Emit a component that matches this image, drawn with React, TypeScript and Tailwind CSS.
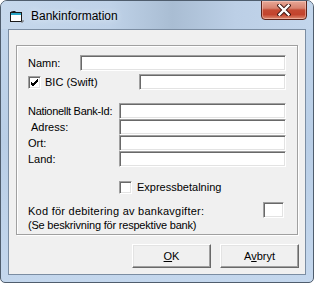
import React from 'react'

const sunken =
  'bg-white border border-t-[#a0a0a0] border-l-[#a0a0a0] border-b-white border-r-white shadow-[inset_1px_1px_0_#696969,inset_-1px_-1px_0_#e3e3e3]'

const raised =
  'bg-[#f0f0f0] border border-t-white border-l-white border-b-[#696969] border-r-[#696969] shadow-[inset_-1px_-1px_0_#a0a0a0,inset_1px_1px_0_#e3e3e3]'

function Field({ className = '' }: { className?: string }) {
  return <div className={`h-[16px] ${sunken} ${className}`} />
}

function Check({ checked }: { checked?: boolean }) {
  return (
    <div className={`w-[13px] h-[13px] shrink-0 flex items-center justify-center ${sunken}`}>
      {checked && (
        <svg width="9" height="9" viewBox="0 0 9 9">
          <path d="M1 4 L3 6 L8 1 M1 5 L3 7 L8 2 M1 6 L3 8 L8 3" stroke="#000" strokeWidth="1" fill="none" />
        </svg>
      )}
    </div>
  )
}

function Button({ children }: { children: React.ReactNode }) {
  return (
    <div className={`w-[79px] h-[24px] flex items-center justify-center text-[11px] text-black ${raised}`}>
      {children}
    </div>
  )
}

export default function App() {
  return (
    <div className="w-[314px] h-[283px] bg-white" style={{ fontFamily: '"Liberation Sans", Arial, sans-serif' }}>
      <div className="w-[314px] h-[283px] flex flex-col rounded-t-[7px] rounded-b-[5px] border border-[#4f5d6d] bg-gradient-to-b from-[#c2d6ec] via-[#b9cee6] to-[#c4d7ed] overflow-hidden">
        {/* title bar */}
        <div className="h-[28px] flex items-start shrink-0 bg-[linear-gradient(90deg,#c6d8ec_0%,#bfd2e8_35%,#a9bdd3_55%,#bccfe6_75%,#c3d6ec_100%)]">
          <svg className="mt-[10px] ml-[9px]" width="14" height="12" viewBox="0 0 14 12">
            <rect x="0.5" y="1.5" width="11" height="9" fill="#fff" stroke="#1a1a1a" />
            <rect x="1" y="2" width="10" height="2" fill="#2aa6c8" />
            <path d="M0.5 1.5 L2.5 0.5 L5.5 0.5" stroke="#1a1a1a" fill="none" />
            <path d="M11 11 L13 11 L13 9" stroke="#6a6a6a" fill="none" />
          </svg>
          <span className="ml-[7px] mt-[8px] text-[12px] leading-[14px] text-black [text-shadow:0_0_6px_#eaf2fb]">
            Bankinformation
          </span>
          <div className="ml-auto mr-[6px] -mt-[1px] w-[46px] h-[20px] rounded-b-[4px] border border-[#5b2219] bg-[linear-gradient(180deg,#e8a897_0%,#d7826f_40%,#c44a33_50%,#c3432d_75%,#dd8b72_100%)] shadow-[inset_0_0_0_1px_rgba(255,220,210,0.45)] flex items-center justify-center">
            <svg width="14" height="12" viewBox="0 0 14 12">
              <path d="M2.5 1.5 L11.5 10.5 M11.5 1.5 L2.5 10.5" stroke="#3a1410" strokeWidth="4.2" strokeLinecap="square" />
              <path d="M2.5 1.5 L11.5 10.5 M11.5 1.5 L2.5 10.5" stroke="#fff" strokeWidth="2.4" strokeLinecap="square" />
            </svg>
          </div>
        </div>

        {/* client */}
        <div className="ml-[7px] w-[298px] h-[246px] border border-[#7b8da2] bg-[#f0f0f0] flex flex-col text-[11px] text-black">
          <div className="ml-[7px] mt-[15px] w-[282px] h-[190px] border border-[#a0a0a0] shadow-[inset_1px_1px_0_#fff,1px_1px_0_#fff] flex flex-col pl-[11px] pr-[11px]">
            <div className="mt-[9px] h-[16px] flex items-center">
              <span className="w-[52px]">Namn:</span>
              <Field className="w-[206px]" />
            </div>
            <div className="mt-[3px] h-[16px] flex items-center">
              <Check checked />
              <span className="ml-[4px]">BIC (Swift)</span>
              <Field className="ml-auto w-[147px]" />
            </div>
            <div className="mt-[13px] flex flex-col">
              <div className="h-[16px] flex items-center">
                <span className="w-[91px] tracking-[-0.3px]">Nationellt Bank-Id:</span>
                <Field className="w-[167px]" />
              </div>
              <div className="h-[16px] flex items-center">
                <span className="w-[91px] pl-[3px]">Adress:</span>
                <Field className="w-[167px]" />
              </div>
              <div className="h-[16px] flex items-center">
                <span className="w-[91px]">Ort:</span>
                <Field className="w-[167px]" />
              </div>
              <div className="h-[16px] flex items-center">
                <span className="w-[91px]">Land:</span>
                <Field className="w-[167px]" />
              </div>
            </div>
            <div className="mt-[14px] h-[13px] flex items-center pl-[91px]">
              <Check />
              <span className="ml-[5px]">Expressbetalning</span>
            </div>
            <div className="mt-[8px] flex items-start">
              <div className="pt-[2px] leading-[14px]">
                <div className="tracking-[0.25px]">Kod för debitering av bankavgifter:</div>
                <div className="tracking-[-0.2px]">(Se beskrivning för respektive bank)</div>
              </div>
              <Field className="ml-auto mr-[2px] w-[21px]" />
            </div>
          </div>
          <div className="mt-[9px] flex justify-end gap-[9px] pr-[6px]">
            <Button>
              <span>
                <u>O</u>K
              </span>
            </Button>
            <Button>
              <span>
                A<u>v</u>bryt
              </span>
            </Button>
          </div>
        </div>
      </div>
    </div>
  )
}
